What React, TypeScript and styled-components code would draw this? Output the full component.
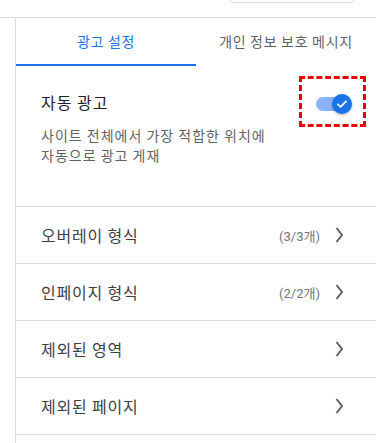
import React, { useState } from "react";
import styled, { createGlobalStyle } from "styled-components";

const GlobalStyle = createGlobalStyle`
  body {
    margin: 0;
    background: #ffffff;
    font-family: Roboto, "Noto Sans CJK KR", sans-serif;
    color: #202124;
  }
  * { box-sizing: border-box; }
`;

const rows = [
  { label: "오버레이 형식", count: "(3/3개)" },
  { label: "인페이지 형식", count: "(2/2개)" },
  { label: "제외된 영역", count: "" },
  { label: "제외된 페이지", count: "" },
];

const App = () => {
  const [tab, setTab] = useState(0);
  const [auto, setAuto] = useState(true);

  return (
    <Page>
      <GlobalStyle />
      <Header>
        <SearchBox />
      </Header>
      <Body>
        <Gutter />
        <Panel>
          <Tabs>
            <Tab active={tab === 0} onClick={() => setTab(0)}>
              광고 설정
            </Tab>
            <Tab active={tab === 1} onClick={() => setTab(1)}>
              개인 정보 보호 메시지
            </Tab>
          </Tabs>
          <AutoSection>
            <TextCol>
              <Title>자동 광고</Title>
              <Desc>
                사이트 전체에서 가장 적합한 위치에
                <br />
                자동으로 광고 게재
              </Desc>
            </TextCol>
            <Highlight>
              <Switch on={auto} onClick={() => setAuto(!auto)}>
                <Track on={auto} />
                <Thumb on={auto}>
                  <svg width="14" height="14" viewBox="0 0 24 24">
                    <path
                      d="M5 12.5l4.5 4.5L19 7.5"
                      fill="none"
                      stroke="#fff"
                      strokeWidth="3"
                      strokeLinecap="round"
                      strokeLinejoin="round"
                    />
                  </svg>
                </Thumb>
              </Switch>
            </Highlight>
          </AutoSection>
          {rows.map((r) => (
            <Row key={r.label}>
              <RowLabel>{r.label}</RowLabel>
              <RowRight>
                {r.count && <Count>{r.count}</Count>}
                <svg width="10" height="16" viewBox="0 0 10 16">
                  <polyline
                    points="2.5,1 8,8 2.5,15"
                    fill="none"
                    stroke="#5f6368"
                    strokeWidth="2"
                  />
                </svg>
              </RowRight>
            </Row>
          ))}
        </Panel>
      </Body>
    </Page>
  );
};

export default App;

const Page = styled.div`
  width: 376px;
  height: 443px;
  overflow: hidden;
  background: #fff;
`;

const Header = styled.div`
  height: 18px;
  border-bottom: 1px solid #dadce0;
  display: flex;
  justify-content: flex-end;
  padding-right: 21px;
`;

const SearchBox = styled.div`
  width: 126px;
  height: 12px;
  margin-top: -9px;
  border: 1px solid #dadce0;
  border-radius: 4px;
`;

const Body = styled.div`
  display: flex;
`;

const Gutter = styled.div`
  width: 15px;
  flex-shrink: 0;
`;

const Panel = styled.div`
  flex: 1;
  border-left: 1px solid #dadce0;
  min-height: 430px;
`;

const Tabs = styled.div`
  display: grid;
  grid-template-columns: 180px 1fr;
  height: 48px;
`;

const Tab = styled.div<{ active: boolean }>`
  display: flex;
  align-items: center;
  justify-content: center;
  font-family: "Noto Sans CJK KR", sans-serif;
  font-size: 14px;
  letter-spacing: 0.7px;
  color: ${(p) => (p.active ? "#1a73e8" : "#5f6368")};
  border-bottom: 2px solid ${(p) => (p.active ? "#1a73e8" : "transparent")};
  white-space: nowrap;
  cursor: pointer;
`;

const AutoSection = styled.div`
  display: flex;
  justify-content: space-between;
  align-items: flex-start;
  padding: 10px 10px 0 25px;
  border-bottom: 1px solid #dadce0;
`;

const TextCol = styled.div`
  padding: 14px 0 41px;
`;

const Title = styled.div`
  font-family: "Noto Sans CJK KR", sans-serif;
  font-size: 16px;
  line-height: 24px;
  letter-spacing: 1px;
  color: #202124;
`;

const Desc = styled.div`
  margin-top: 11px;
  font-family: "Noto Sans CJK KR", sans-serif;
  font-size: 14px;
  line-height: 20px;
  letter-spacing: 1px;
  color: #5f6368;
`;

const Highlight = styled.div`
  width: 67px;
  height: 51px;
  border: 3px dashed #ee0000;
  display: flex;
  align-items: center;
  justify-content: center;
  padding: 4px 0 0 3px;
`;

const Switch = styled.div<{ on: boolean }>`
  position: relative;
  width: 36px;
  height: 20px;
  cursor: pointer;
`;

const Track = styled.div<{ on: boolean }>`
  position: absolute;
  left: 0;
  right: 2px;
  top: 3px;
  height: 14px;
  border-radius: 7px;
  background: ${(p) => (p.on ? "#8ab4f8" : "#bdc1c6")};
`;

const Thumb = styled.div<{ on: boolean }>`
  position: absolute;
  top: 0;
  left: ${(p) => (p.on ? "16px" : "0")};
  width: 20px;
  height: 20px;
  border-radius: 50%;
  background: ${(p) => (p.on ? "#1a73e8" : "#fff")};
  box-shadow: 0 1px 3px rgba(60, 64, 67, 0.4);
  display: flex;
  align-items: center;
  justify-content: center;
`;

const Row = styled.div`
  height: 57px;
  display: flex;
  align-items: center;
  justify-content: space-between;
  padding: 0 32px 0 25px;
  border-bottom: 1px solid #dadce0;
  cursor: pointer;
`;

const RowLabel = styled.div`
  font-family: "Noto Sans CJK KR", sans-serif;
  font-size: 16px;
  letter-spacing: 0.8px;
  color: #3c4043;
`;

const RowRight = styled.div`
  display: flex;
  align-items: center;
  gap: 14px;
`;

const Count = styled.span`
  font-family: Roboto, "Noto Sans CJK KR", sans-serif;
  font-size: 13px;
  color: #70757a;
`;
